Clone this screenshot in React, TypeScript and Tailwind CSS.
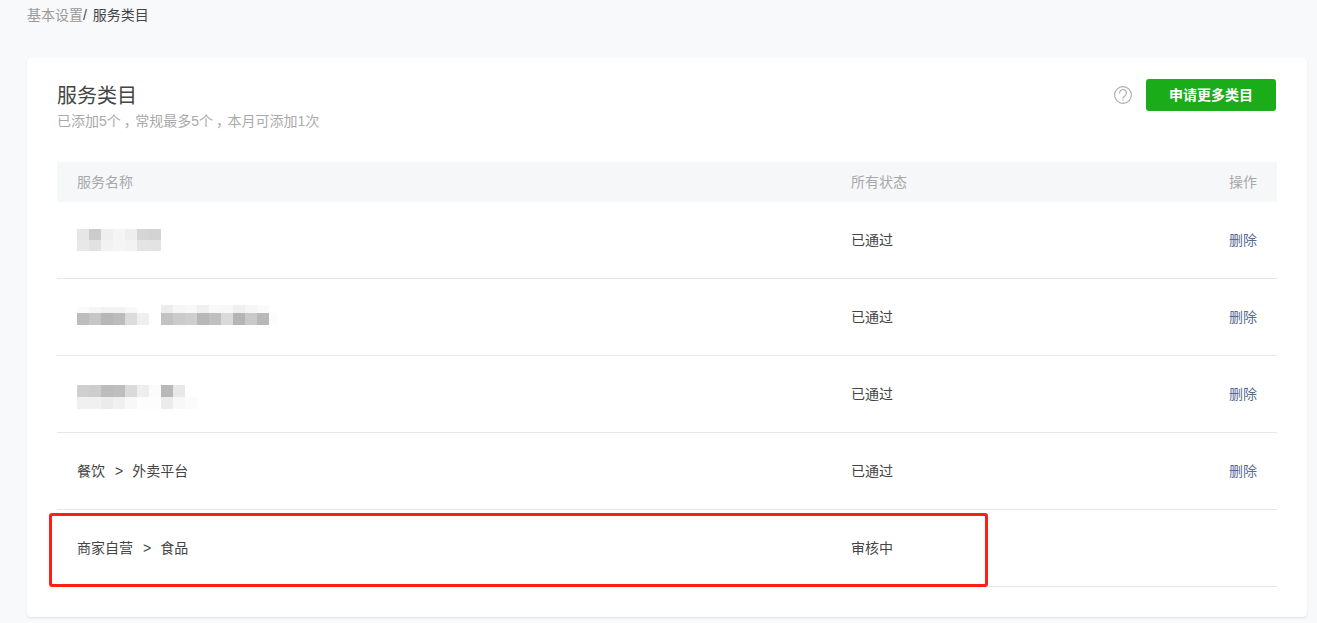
const FONT = "font-['Liberation_Sans','Noto_Sans_CJK_SC',sans-serif]";

type Cell = [number, number, number, number, string];

const cells = (y: number, h: number, x0: number, colors: string[]): Cell[] =>
    colors.map((c, i) => [x0 + i * 12, y, 12, h, c]);

// pixelated names, y is local to a 44px tall box
const MOSAICS: Cell[][] = [
    [
        ...cells(11, 11, 0, ['#e6e6e6', '#cbcbcb', '#efefef', '#f4f4f4', '#eeeeee', '#d5d5d5', '#d3d3d3']),
        ...cells(22, 11, 0, ['#e8e8e8', '#e2e2e2', '#f2f2f2', '#f5f5f5', '#f3f3f3', '#e4e4e4', '#e3e3e3']),
    ],
    [
        ...cells(12, 6, 0, ['#fbfbfb', '#f6f6f6', '#f1f1f1', '#f2f2f2', '#f8f8f8']),
        ...cells(18, 12, 0, ['#bdbdbd', '#c6c6c6', '#b7b7b7', '#bcbcbc', '#dcdcdc', '#efefef']),
        ...cells(10, 8, 84, ['#ececec', '#f6f6f6', '#f8f8f8', '#f0f0f0', '#f9f9f9', '#f8f8f8', '#efefef', '#f5f5f5', '#fafafa']),
        ...cells(18, 12, 84, ['#c2c2c2', '#cbcbcb', '#cecece', '#b8b8b8', '#c0c0c0', '#dadada', '#b5b5b5', '#c9c9c9', '#b8b8b8', '#fcfcfc']),
    ],
    [
        ...cells(13, 12, 0, ['#cfcfcf', '#cdcdcd', '#bcbcbc', '#bebebe', '#dadada', '#eeeeee', '#fbfbfb', '#b8b8b8', '#e8e8e8']),
        ...cells(25, 12, 0, ['#f0f0f0', '#f0f0f0', '#ebebeb', '#f0f0f0', '#f8f8f8', '#fdfdfd', '#fdfdfd', '#ebebeb', '#f8f8f8', '#fbfbfb']),
    ],
];

const Mosaic = ({ data }: { data: Cell[] }) => (
    <svg width="200" height="44" viewBox="0 0 200 44" shapeRendering="crispEdges">
        {data.map(([x, y, w, h, fill]) => (
            <rect key={`${x}-${y}`} x={x} y={y} width={w} height={h} fill={fill} />
        ))}
    </svg>
);

const HelpIcon = () => (
    <svg width="18" height="18" viewBox="0 0 18 18" fill="none" stroke="#aaaaaa" strokeWidth="1.1">
        <circle cx="9" cy="9" r="8.4" />
        <path d="M5.6 7a3.4 3.4 0 1 1 5.4 2.7c-1.3.9-2 1.4-2 2.6" strokeLinecap="round" />
        <circle cx="9" cy="14.2" r=".7" fill="#aaaaaa" stroke="none" />
    </svg>
);

const Crumb = ({ parts }: { parts: [string, string] }) => (
    <span className="flex items-center">
        <span>{parts[0]}</span>
        <span className="ml-[10px] mr-[9px] text-[14px]">&gt;</span>
        <span>{parts[1]}</span>
    </span>
);

const Comma = () => <span className="inline-block ml-[3px] -mr-[2.5px]">，</span>;

const Row = ({ name, status, canDelete = true }: { name: React.ReactNode; status: string; canDelete?: boolean }) => (
    <div className="grid grid-cols-[774px_1fr_auto] items-center h-[77px] px-5 border-b border-[#e7e7eb] text-[14px] leading-5 text-[#444444]">
        <div>{name}</div>
        <div>{status}</div>
        {canDelete && <a className="text-[#576b95]">删除</a>}
    </div>
);

const App = () => {
    return (
        <div className={`${FONT} h-[623px] overflow-hidden bg-[#f8f9fb] px-[27px] pt-[5px]`}>
            {/* Breadcrumb */}
            <div className="h-5 text-[14px] leading-5 text-[#444444] whitespace-pre">
                <span className="text-[#9a9a9a]">基本设置</span>/ <span className="ml-[2px]">服务类目</span>
            </div>

            {/* Card */}
            <div className="relative mt-[33px] w-[1280px] h-[559px] bg-white rounded shadow-[0_1px_2px_rgba(0,0,0,0.1)] px-[30px] pt-[21px]">
                <div className="flex items-start justify-between h-[83px]">
                    <div className="pt-px">
                        <h2 className="text-[20px] leading-[32px] font-normal text-[#444444]">服务类目</h2>
                        <p className="-mt-[1px] text-[14px] leading-5 text-[#aaaaaa]">
                            已添加5个<Comma />常规最多5个<Comma />本月可添加1次
                        </p>
                    </div>
                    <div className="flex items-center gap-[14px] pr-px">
                        <HelpIcon />
                        <button className="w-[130px] h-8 rounded-[3px] bg-[#1aad19] text-[14px] font-bold text-white">
                            申请更多类目
                        </button>
                    </div>
                </div>

                {/* Table */}
                <div className="grid grid-cols-[774px_1fr_auto] items-center h-10 px-5 bg-[#f6f7f9] text-[14px] leading-5 text-[#a8a8a8]">
                    <div>服务名称</div>
                    <div>所有状态</div>
                    <div>操作</div>
                </div>
                <Row name={<Mosaic data={MOSAICS[0]} />} status="已通过" />
                <Row name={<Mosaic data={MOSAICS[1]} />} status="已通过" />
                <Row name={<Mosaic data={MOSAICS[2]} />} status="已通过" />
                <Row name={<Crumb parts={['餐饮', '外卖平台']} />} status="已通过" />
                <Row name={<Crumb parts={['商家自营', '食品']} />} status="审核中" canDelete={false} />

                {/* Red annotation box */}
                <div className="absolute left-[22px] top-[455px] w-[939px] h-[74px] border-[3px] border-[#ff2015] rounded-[3px]" />
            </div>
        </div>
    );
};

export default App;
